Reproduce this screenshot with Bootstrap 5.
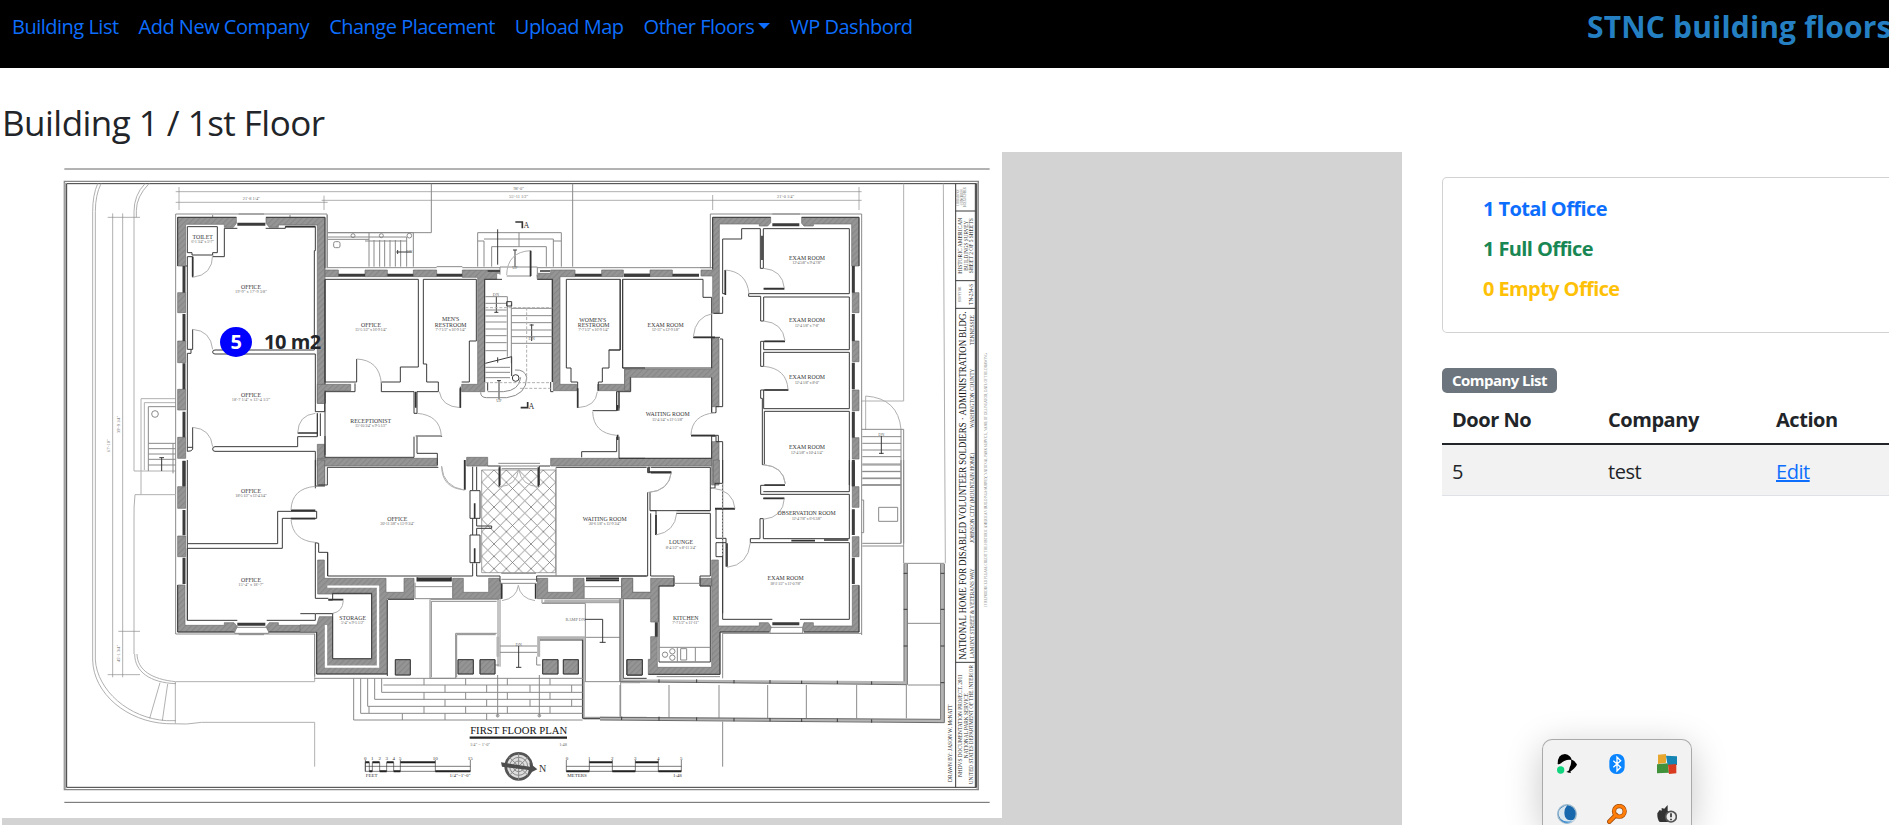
<!DOCTYPE html>
<html lang="en">
<head>
<meta charset="utf-8">
<meta name="viewport" content="width=device-width, initial-scale=1">
<title>STNC building floors</title>
<link rel="stylesheet" href="https://cdn.jsdelivr.net/npm/bootstrap@5.3.0/dist/css/bootstrap.min.css">
<style>
html{font-size:20px}
body{font-family:"Open Sans","Noto Sans",sans-serif;overflow:hidden;height:825px;letter-spacing:-.46px}
.topbar{height:68px;padding:12px 0 0 12px;white-space:nowrap}
.topbar ul{letter-spacing:-.5px}
.topbar a{text-decoration:none;line-height:30px}
.topbar ul{gap:20px}
.topbar .dropdown-toggle::after{margin-left:4px;vertical-align:5px}
.brand-title{font-size:30px;font-weight:700;line-height:30px;height:40px;color:#2580c3;width:302px;letter-spacing:.17px;overflow:hidden}
.page-title{font-size:35px;line-height:42px;margin:34px 0 8px 2px;letter-spacing:-.53px;font-weight:400}
.map-area{width:1400px;height:673px;margin-left:2px;background:#d3d3d3}
.map-area>svg{display:block;background:#fff}
.pin{left:218px;top:175px;gap:12px}
.pin-dot{width:32px;height:30px;border-radius:50%;background:#00f;color:#fff}
.side{margin-left:40px;width:447px;flex:none}
.stats{margin-top:25px;height:156px;padding:16px 40px;border-radius:5px 0 0 5px;border-right:0}
.stats div{height:40px;line-height:30px;flex:none;font-weight:700;letter-spacing:-.6px}
.list-tag{margin-top:35px;width:115px;height:25px;font-size:15px;line-height:25px;letter-spacing:-.55px;border-radius:5px}
.companies{margin-top:2px;table-layout:fixed}
.companies th,.companies td{padding:9.5px 10px 8px;line-height:30px}
.companies thead th{border-bottom:2px solid #212529}
.companies tbody td{padding-top:12px;padding-bottom:8px;background:#f2f2f2}
.tray{left:1542px;top:739px;width:150px;height:86px;overflow:hidden;background:#f2f2f2;border:1px solid #aaa;border-bottom:0;border-radius:10px 10px 0 0;box-shadow:0 8px 36px rgba(0,0,0,.22);padding:14px;display:grid;grid-template-columns:repeat(3,20px);gap:30px;align-content:start}
.k{fill:none;stroke:#3a3a3a;stroke-width:3}
.kk{fill:none;stroke:#333;stroke-width:5}
.win{fill:none;stroke:#3c3c3c;stroke-width:9}
.g{fill:none;stroke:#b0b0b0;stroke-width:3}
.m{fill:none;stroke:#8a8a8a;stroke-width:3}
.band{fill:none;stroke:#b4b4b4;stroke-width:9}
.wall{fill:url(#hatch);stroke:#6a6a6a;stroke-width:2}
.plan text{font-family:"Liberation Serif",serif;letter-spacing:0;text-anchor:middle;fill:#333}
.nm{font-size:17.5px}.dm{font-size:13px}
.plan .dm{fill:#6c6c6c}
</style>
</head>
<body>
<header class="topbar bg-black d-flex justify-content-between">
  <ul class="list-unstyled d-flex mb-0">
    <li><a href="#">Building List</a></li>
    <li><a href="#">Add New Company</a></li>
    <li><a href="#">Change Placement</a></li>
    <li><a href="#">Upload Map</a></li>
    <li><a href="#" class="dropdown-toggle">Other Floors</a></li>
    <li><a href="#">WP Dashbord</a></li>
  </ul>
  <div class="brand-title">STNC building floors</div>
</header>
<h1 class="page-title">Building 1 / 1st Floor</h1>
<main class="d-flex">
<section class="map-area position-relative flex-shrink-0">
<svg class="plan" width="1000" height="666" viewBox="6 456 3000 1998">
<defs>
<pattern id="hatch" width="12" height="12" patternUnits="userSpaceOnUse" patternTransform="rotate(45)"><rect width="12" height="12" fill="#959595"/><path d="M2 0V12" stroke="#848484" stroke-width="3"/></pattern>
<pattern id="tiles" width="37" height="37" patternUnits="userSpaceOnUse" x="545" y="30"><path d="M0 0L37 37M37 0L0 37" stroke="#777" stroke-width="2.4" fill="none"/></pattern>
</defs>
<!-- sheet frame -->
<path class="m" d="M193 507H2969M193 2407H2969" style="stroke:#666"/>
<path d="M193 544H2935V2369H193Z" fill="none" stroke="#888" stroke-width="4"/>
<path d="M196 548V2366M2932 548V2366" stroke="#aaa" stroke-width="6"/>
<path class="k" d="M200 551H2929V2362H200Z" stroke-width="4"/>

<!-- north west -->
<g transform="translate(0 420)">
<path class="g" d="M293 131Q278 165 278 215V1560M303 131Q286 165 286 215V1560M435 131Q402 165 402 215V993M447 131Q409 170 409 212V232"/>
<path class="m" style="stroke-width:2" d="M338 220V1612M368 220V1612M323 232H420M527 155H2585M527 187H983M965 181H2585M537 141V210M972 167V210M2138 165V210M2577 141V210"/>
<path class="g" d="M423 1064V776H527M402 993H527M433 990V788H527"/><path class="m" d="M445 993V800H527M445 910H527M445 926H527M445 942H527M445 958H527M445 975H527M519 910V1000"/>
<circle class="m" cx="465" cy="822" r="10"/><path class="k" d="M485 993V953M478 953H492"/>
<path class="m" d="M527 1482V222H981V385M716 222H792M870 225V232M638 225V232"/>
<path class="wall" d="M533 232H709V250L700 262H673V253H557V378H533ZM798 232H975V790H952V255H835V262H808L798 250ZM533 458H557V518H533ZM533 603H557V668H533ZM533 748H557V810H533ZM533 892H557V955H533ZM952 913H974V1035H952Z"/>
<path class="k" d="M709 232H533V378M798 232H975V385M975 420V790"/>
<path class="win" d="M552 378V458M552 522V603M552 670V748M552 815V892M552 962V1040M712 253H796"/>
<path class="k" d="M562 350V378H557M562 350H578V412M712 265H673V350H638V338H652V260H562V338H576V345H638M797 265H856V260H946V332H943V630H645Q638 630 638 636Q638 642 645 642H946V815H974V757M562 378V628H578V568M562 640H573V628M578 862V928Q575 934 562 934V640M893 890V920H645Q638 920 638 927Q638 934 645 934H946V1045M893 890H952V820M562 922H578M975 888V945M952 820V888M961 820V888"/>
<path class="kk" d="M893 879H952M856 260H946M578 350V410"/>
<path class="g" d="M638 345Q638 405 578 412M578 568Q632 572 638 628M578 862Q632 866 638 920M893 879Q895 825 946 820"/>
<text class="dm" x="754" y="180">21'-8 1/4"</text><text class="dm" transform="translate(330 917) rotate(-90)">67'-10"</text><text class="dm" transform="translate(361 853) rotate(-90)">39'-9 1/4"</text><text class="dm" transform="translate(361 1540) rotate(-90)">45'-1 3/4"</text>
<text class="nm" x="608" y="297">TOILET</text><text class="dm" x="608" y="309" textLength="68">6'-1 3/4" x 5'-7"</text>
<text class="nm" x="753" y="446">OFFICE</text><text class="dm" x="753" y="458">19'-9" x 17'-9 3/8"</text>
<text class="nm" x="753" y="771">OFFICE</text><text class="dm" x="753" y="783">18'-7 1/4" x 13'-4 1/2"</text>
</g>

<!-- north centre -->
<g transform="translate(900 420)">
<path class="m" d="M394 131V278H83M818 131V380M83 278H340V380M83 291H320V303H195M207 278V380M222 300V380M239 300V380M254 300V380M270 300V380M286 300V380M302 300V380M320 303V380M83 298H207M82 383H410M82 383V225M410 380H487M487 383H600M533 380V278H784V380M533 303H552V380M552 297H760V380M575 380V320H739V380M784 303H760M657 278V320M712 383H1240"/>
<circle class="m" cx="159" cy="287" r="6"/><circle class="m" cx="244" cy="287" r="6"/><circle class="m" cx="328" cy="287" r="7"/><rect class="m" x="101" y="305" width="19" height="18" rx="5"/>
<path class="k" d="M289 336H335M293 330V342M593 268V374M645 330V388M639 330H651M589 470V517M583 517H595M695 553V603M689 555H701M597 720V778M591 722H603"/>
<path class="wall" d="M75 390H115V410H75ZM195 390H262V410H195ZM340 390H410V410H340ZM487 390H605V400H590V418H554V755H485V733H533V412H487ZM710 400H752V390H825V410H780V733H830V752H760V418H712ZM905 390H970V410H905ZM52 733H152V752H74V790H52ZM74 955H412V978H52V955ZM500 952H563V978H500ZM893 733H974V688H990V752H893ZM752 955H1235V978H752Z"/>
<path class="win" d="M115 406H195M262 406H340M410 406H487M825 406H905M972 406H1050"/>
<path d="M600 381H712V404H600Z" fill="#fff"/><path class="m" d="M600 404V381H712V404M620 408H690"/>
<path class="k" d="M75 418H355V681H301V726H244V755H342V820H351V755H415V726H380V672H370V418H529V603H508V726H485M75 418V726H170V657M75 755V952H342V890M351 890V940H412V975M75 755H165V730M554 418V726M563 726V752M606 418H554M712 418H757V726M757 418V726M752 726V755H760M799 418H961V630H927V684H907V726H895V752M799 418V684H813V726H833V803M968 418V684H1035M481 803V740M691 332V410M950 755V812H878M957 755V805M950 890V935H845V952M957 890V955H1035M347 888H425V890M563 978H600V1035M750 978H718V1035"/>
<path class="g" d="M170 657Q238 660 244 730M418 755Q425 800 481 803M351 820Q420 825 424 888M620 405Q622 336 691 332M833 803Q888 800 892 755M878 815Q880 880 950 886M425 978Q425 1045 495 1050"/>
<path class="m" d="M556 470H622V650M634 490V670M556 490H620M556 510H620M556 528H620M556 546H620M556 567H620M556 587H620M556 608H620M556 632H620M634 505H757M634 527H757M634 548H757M634 570H757M634 590H757M634 610H757M556 682H630M556 697H630M556 713H630M542 757Q542 773 560 773H620Q680 765 680 712Q675 688 645 690M563 755H610Q658 752 662 712M600 978H718M605 986H712M595 970H720"/>
<path class="g" stroke-dasharray="9 5" d="M556 503H757M680 503V720M556 728H752M660 745H752"/>
<path class="k" d="M556 670L635 650V708M593 652V668M620 485H635V498H620Z"/><circle class="k" cx="647" cy="714" r="10"/>
<path class="kk" d="M646 246H667V265M662 803H683V786M481 745V803M692 332V408M833 745V803M347 755V803M563 393H600M720 393H750"/>
<text x="679" y="263" font-size="24">A</text><text x="694" y="806" font-size="24">A</text>
<text class="dm" x="656" y="150">98'-0"</text><text class="dm" x="656" y="174">55'-11 1/2"</text>
<text class="nm" x="213" y="561">OFFICE</text><text class="dm" x="213" y="574" textLength="96">15'-5 1/2" x 16'-9 1/4"</text>
<text class="nm" x="452" y="544">MEN'S</text><text class="nm" x="452" y="561">RESTROOM</text><text class="dm" x="452" y="574" textLength="92">7'-7 1/2" x 16'-9 1/4"</text>
<text class="nm" x="878" y="545">WOMEN'S</text><text class="nm" x="881" y="561">RESTROOM</text><text class="dm" x="881" y="574" textLength="92">7'-7 1/2" x 16'-9 1/4"</text>
<text class="nm" x="212" y="848">RECEPTIONIST</text><text class="dm" x="213" y="861" textLength="96">15'-10 3/4" x 9'-5 1/2"</text>
<text class="dm" x="588" y="468">DN</text><text class="dm" x="695" y="601">DN</text><text class="dm" x="597" y="787">UP</text><text class="dm" x="645" y="388">UP</text><text class="dm" x="328" y="340">DN</text>
</g>

<!-- north east -->
<g transform="translate(1800 420)">
<path class="g" d="M911 131V783H785M1030 131L1036 1270M797 870V768Q895 775 903 868"/>
<path class="m" d="M331 385V222H785V1485M300 383H331M517 222H600"/>
<path class="wall" d="M338 232H512V248L503 258H478V252H358V520H338V408H303V390H338ZM605 232H777V378H755V252H640V258H612L605 250ZM757 458H777V518H757ZM757 603H777V665H757ZM757 750H777V812H757ZM757 893H777V957H757ZM150 390H217V410H150ZM74 688H335V595H357V800H335V712H90V752H74ZM335 905H357V1035H335Z"/>
<path class="k" d="M338 388V232H512M605 232H777V378"/>
<path class="win" d="M72 406H150M217 406H297M517 254H598M760 378V458M760 522V603M760 668V748M760 815V893M760 960V1040"/>
<path class="k" d="M60 418V630H26M68 418V684H335V472H309V418H68M368 297H425V266H481V385H490V266H748V461H446V469H482V543H491V471H748V629H491V604H482V679H491V637H748V806H491V750H482V775H487V974H493V814H748V1035M368 297V461H376V390M368 470V520H340M360 597H368V800H348V818H335V800M280 592H360M553 447H491M555 604H490M565 750H490M335 712V818M92 712V755H50V812M57 755V812M57 955H335V888H348V905H368V1420M273 886H355V905"/>
<path class="kk" d="M376 390V465M486 287V360M491 446H553M493 604H555M493 750H565M280 592H345M273 887H345M147 980V996H214M53 795V812M53 884V900"/>
<path class="g" d="M376 390Q440 395 447 461M491 385Q548 390 553 445M491 543Q548 548 555 602M491 679Q560 685 564 748M340 520Q285 530 280 590M345 818Q275 825 273 885M491 974Q550 980 556 1030M214 996Q210 1050 145 1058"/>
<path class="m" d="M785 868H911V1210M787 890H903M787 910H903M787 930H903M787 950H903M787 972H903M787 994H903M787 1014H903M787 1034H903M903 868V1210"/><path class="k" d="M844 888V942M837 940H851"/>
<path class="k" d="M1067 131V1942M1126 131V1942M1067 213H1126M1067 422H1126M1067 505H1126M1067 1567H1126"/>
<text class="dm" x="557" y="174">21'-0 1/4"</text>
<text class="nm" x="621" y="359">EXAM ROOM</text><text class="dm" x="621" y="372" textLength="88">12'-4 5/8" x 9'-4 7/8"</text>
<text class="nm" x="621" y="547">EXAM ROOM</text><text class="dm" x="621" y="560" textLength="74">12'-4 1/8" x 7'-8"</text>
<text class="nm" x="621" y="718">EXAM ROOM</text><text class="dm" x="621" y="731" textLength="74">12'-4 1/8" x 8'-0"</text>
<text class="nm" x="621" y="928">EXAM ROOM</text><text class="dm" x="621" y="941" textLength="97">12'-4 5/8" x 10'-4 1/4"</text>
<text class="nm" x="197" y="561">EXAM ROOM</text><text class="dm" x="197" y="574" textLength="84">12'-11" x 12'-9 1/8"</text>
<text class="nm" x="203" y="829">WAITING ROOM</text><text class="dm" x="203" y="842" textLength="94">15'-4 1/4" x 11'-5 1/8"</text><text class="dm" x="844" y="888">DN</text>
<!-- title block -->
<g transform="rotate(-90)">
<text x="-1037" y="1097" font-size="31" textLength="1045" lengthAdjust="spacingAndGlyphs" style="fill:#111">NATIONAL HOME FOR DISABLED VOLUNTEER SOLDIERS · ADMINISTRATION BLDG.</text>
<text x="-1420" y="1121" font-size="16" textLength="270" lengthAdjust="spacingAndGlyphs">LAMONT STREET &amp; VETERANS WAY</text>
<text x="-1074" y="1121" font-size="16" textLength="270" lengthAdjust="spacingAndGlyphs">JOHNSON CITY (MOUNTAIN HOME)</text>
<text x="-775" y="1121" font-size="16" textLength="178" lengthAdjust="spacingAndGlyphs">WASHINGTON COUNTY</text><text x="-570" y="1121" font-size="16" textLength="90" lengthAdjust="spacingAndGlyphs">TENNESSEE</text>
<text x="-317" y="1087" font-size="16" textLength="168" lengthAdjust="spacingAndGlyphs">HISTORIC AMERICAN</text><text x="-317" y="1103" font-size="16" textLength="150" lengthAdjust="spacingAndGlyphs">BUILDINGS SURVEY</text><text x="-317" y="1119" font-size="16" textLength="165" lengthAdjust="spacingAndGlyphs">SHEET 2 OF 5 SHEETS</text>
<text x="-463" y="1119" font-size="16" textLength="62" lengthAdjust="spacingAndGlyphs">TN-254-S</text><text class="dm" x="-463" y="1083" textLength="48" lengthAdjust="spacingAndGlyphs">SURVEY NO.</text>
<text class="dm" x="-172" y="1077" textLength="50" lengthAdjust="spacingAndGlyphs">LIBRARY OF</text><text class="dm" x="-172" y="1088" textLength="48" lengthAdjust="spacingAndGlyphs">CONGRESS</text><text class="dm" x="-172" y="1099" textLength="60" lengthAdjust="spacingAndGlyphs">INDEX NUMBER</text>
<text x="-1757" y="1087" font-size="16" textLength="308" lengthAdjust="spacingAndGlyphs">NHDVS DOCUMENTATION PROJECT, 2011</text><text x="-1757" y="1103" font-size="16" textLength="195" lengthAdjust="spacingAndGlyphs">NATIONAL PARK SERVICE</text><text x="-1754" y="1119" font-size="16" textLength="358" lengthAdjust="spacingAndGlyphs">UNITED STATES DEPARTMENT OF THE INTERIOR</text>
<text x="-1810" y="1056" font-size="16" textLength="232" lengthAdjust="spacingAndGlyphs">DRAWN BY: JASON W. McNATT</text>
<text x="-1020" y="1161" font-size="9" textLength="760" lengthAdjust="spacingAndGlyphs" style="fill:#777">IF REPRODUCED PLEASE CREDIT THE HISTORIC AMERICAN BUILDINGS SURVEY, NATIONAL PARK SERVICE, NAME OF DELINEATOR, DATE OF THE DRAWING</text>
</g></g>

<!-- south west -->
<g transform="translate(0 1380)">
<path class="g" d="M278 600C280 700 380 785 500 791L560 792L605 787H944V920M286 600C292 690 385 775 500 782H527M405 104H527M405 104Q401 140 402 180V582M411 582C412 630 455 658 527 665H944V520M404 582C404 635 450 668 527 671"/>
<path class="m" style="stroke-width:2" d="M480 668L449 775M503 672L487 782M526 666V790M355 514H420M323 644H420"/>
<path class="m" d="M527 522H944V650M716 524H792"/>
<path class="wall" d="M533 80H557V145H533ZM533 228H557V290H533ZM533 375H555V496H673V488H702L712 500L704 516H533ZM798 500L808 488H835V496H955V516H806ZM952 0H974V75H952Z"/>
<path class="k" d="M533 375V516H704M806 516H955"/>
<path class="win" d="M552 3V78M552 150V226M552 293V372M712 493H796"/><path class="m" d="M704 502H806V520H704Z"/>
<path class="k" d="M562 0V251H833V154H950V175H847V265H562V481H712M800 481H946V461H1000M946 0V78H975M562 251V481M946 248V415H985M946 248L956 250V277H983V348"/>
<path class="kk" d="M873 151H946M873 176H946"/>
<path class="g" d="M946 79Q875 85 873 150M873 178Q878 242 946 247"/>
<text class="nm" x="753" y="99">OFFICE</text><text class="dm" x="753" y="111" textLength="94">18'-5 1/2" x 13'-4 3/4"</text>
<text class="nm" x="753" y="365">OFFICE</text><text class="dm" x="753" y="377">15'-4" x 18'-7"</text>
</g>

<!-- south centre -->
<g transform="translate(900 1380)">
<path d="M545 30H767V338H545Z" fill="url(#tiles)" stroke="#777" stroke-width="2"/>
<path class="wall" d="M53 300H73V355H258V397H312V355H342V416H260V642H50V516H0V495H50L58 470H98V598H215V402H53ZM458 355H490V397H566V355H598L605 375V416H458ZM712 355H743V397H820V355H852V416H712ZM965 355H998V397H1052V416H965Z"/>
<path d="M82 380H234V620H78V495" fill="none" stroke="#fff" stroke-width="7"/>
<path class="k" d="M82 22H415M82 22V75H55M83 277V348H518V310M518 20V90M530 20V90M530 175V198H575V205H530V225M518 175V225M530 310V348H600V365M510 92H540V175H510ZM510 225H540V308H510ZM98 460V596H215V400H98V420H85M263 418H342M1 461H45M768 22H1040M710 365V348H1040M495 0V90M262 420V648M50 516V642H262"/>
<path class="kk" d="M352 352V362H453V352M352 355H453M352 359H453M858 355H957M858 361H957M524 130V175M524 265V308M598 22V80M715 22V80M85 419H130M605 370V416M707 370V416M494 0V88"/>
<path class="g" d="M425 20Q430 80 492 90M598 80Q650 78 656 28Q665 78 715 80M606 422Q650 415 655 376Q660 415 705 422M130 422Q128 455 98 460"/>
<path class="m" d="M604 340H708M604 358H708M604 370H708M345 368V416H458V368M345 380H458M852 368V416H965V368M852 380H965M768 22V348M392 418H597M394 424H590M390 418V655M394 424V652M390 655H467V520H590M470 652V524H587M594 418V620M600 418V620M583 600V615H597M600 558H712M600 577H712M710 590V615H722M726 418V430H855M856 430V665M730 428H965M856 532H960M960 430V665M852 665H1040M962 665V775"/>
<path class="band" d="M594 530V590M716 590V533H856M850 535V775M733 423H965V665H1020M850 775H1040"/>
<path class="k" d="M720 540H848V775H1040M970 418V655H1040"/>
<path class="wall" d="M286 599H331V645H286ZM474 599H520V642H474ZM540 599H585V642H540ZM728 599H774V642H728ZM790 599H835V642H790ZM981 599H1026V645H981Z"/>
<path class="k" d="M286 599H331V645H286ZM474 599H520V642H474ZM540 599H585V642H540ZM728 599H774V642H728ZM790 599H835V642H790ZM981 599H1026V645H981Z"/>
<path class="m" d="M43 655H850M161 655V780H848M182 655V760H848M203 655V739H848M224 655V718H848M245 655V697H848M250 675H848M372 655V675M497 655V675M622 655V675M750 655V675M435 675V697M560 675V697M690 675V697M815 675V697M372 697V718M497 697V718M622 697V718M750 697V718M435 718V739M560 718V739M690 718V739M815 718V739M372 739V760M497 739V760M622 739V760M750 739V760M307 760V780M435 760V780M560 760V780M207 739V760"/>
<path class="m" stroke-width="5" d="M593 645V770M718 645V770"/><circle class="m" cx="593" cy="767" r="4"/><circle class="m" cx="718" cy="767" r="4"/>
<path class="k" d="M656 558V622M648 622H664M855 478H908V548M899 547H917"/>
<text class="nm" x="292" y="182">OFFICE</text><text class="dm" x="292" y="195" textLength="102">20'-11 3/8" x 15'-9 3/4"</text>
<text class="nm" x="914" y="182">WAITING ROOM</text><text class="dm" x="914" y="195" textLength="96">20'-6 1/8" x 15'-9 3/4"</text>
<text class="nm" x="158" y="480">STORAGE</text><text class="dm" x="158" y="492" textLength="70">5'-4" x 9'-5 1/2"</text><text class="dm" x="656" y="557">DN</text><text class="dm" x="826" y="484">RAMP DN</text>
<text x="656" y="821" font-size="31" textLength="291" lengthAdjust="spacingAndGlyphs" style="fill:#111">FIRST FLOOR PLAN</text><path d="M509 833H801" stroke="#222" stroke-width="7"/>
<text class="dm" x="540" y="858">1/4" = 1'-0"</text><text class="dm" x="789" y="858">1:48</text>
<path class="k" style="stroke-width:2" d="M196 900V935M196 919H511M196 907V934H511V900M208 907V934M217 907V934M239 907V934M260 907V934M281 907V934M301 900V934M406 900V934M799 900V934H1144V900M799 919H1144M868 900V934M937 900V934M1006 900V934M1075 900V934"/>
<path d="M196 907H208M217 907H239M260 907H281M301 907H406M208 934H217M239 934H260M281 934H301M406 934H511M868 907H937M799 934H868M937 934H1006M1006 907H1075M1075 934H1144" stroke="#222" stroke-width="6"/>
<g font-size="15"><text x="196" y="899">0</text><text x="217" y="899">1</text><text x="239" y="899">2</text><text x="260" y="899">3</text><text x="281" y="899">4</text><text x="301" y="899">5</text><text x="406" y="899">10</text><text x="511" y="899">15</text><text x="801" y="899">0</text><text x="868" y="899">1</text><text x="937" y="899">2</text><text x="1006" y="899">3</text><text x="1075" y="899">4</text><text x="1144" y="899">5</text><text x="215" y="952">FEET</text><text x="480" y="952">1/4"=1'-0"</text><text x="831" y="952">METERS</text><text x="1132" y="952">1:48</text></g>
<circle cx="656" cy="919" r="39" fill="#ddd" stroke="#555" stroke-width="8"/><circle class="m" cx="656" cy="919" r="27"/><circle class="m" cx="656" cy="919" r="16"/><path class="m" d="M656 880V960M628 892L684 946M684 892L628 946"/><path d="M603 907L690 920L688 908L712 928L684 942L686 930L606 920Z" fill="#4d4d4d"/>
<text x="728" y="937" font-size="30" style="fill:#333">N</text>
</g>

<!-- south east -->
<g transform="translate(1800 1380)">
<path class="wall" d="M65 355H98V397H152V355H222V378H175V486H152V416H65ZM152 530H172V622H335V300H355V498H478V488H505L514 502L508 516H360V643H145V598H152ZM608 502L612 488H640V498H757V376H777V516H612ZM757 80H777V142H757ZM757 230H777V290H757ZM340 0H358V70H340ZM300 355H335V378H300Z"/>
<path class="k" d="M508 516H360V643H145M612 516H777V376"/>
<path class="win" d="M760 5V78M760 148V225M760 293V372M517 491H598M169 487V530"/>
<path class="k" d="M143 22V38H150M152 22H331V84H345V70H368V0M143 97V348H0M150 97V152H331V84M150 152H168V225M230 152H331M152 160V348H222V378H177V606H331V378H300V348H331V160H228M348 147V235H378V320M348 248V290H368M368 248V478H517M348 248H378M346 147H405M451 248V236H480V176H490V236H748V103H482V76H555M451 248H748V478H600M490 95H748V0M490 115H553"/>
<path class="kk" d="M152 38H214M168 165V225M345 146H405M381 250V320M493 75H555M490 115H553M574 242H645M672 240H745"/>
<path class="g" d="M214 38Q205 95 145 97M230 160Q225 215 168 225M335 84Q400 90 405 146M451 248Q445 315 381 322M490 14Q550 18 556 72M553 115Q550 172 490 178"/><path class="g" stroke-dasharray="6 4" d="M368 70V290"/>
<path class="m" d="M222 370H300M177 562H331M232 562V605M286 562V605M242 566H260V600H242ZM510 502H608V520H510ZM367 520H785M368 520V655M368 785V920"/><circle class="m" cx="195" cy="584" r="8"/><circle class="m" cx="217" cy="574" r="8"/><circle class="m" cx="217" cy="593" r="8"/>
<path class="m" d="M785 76H903M787 258H911V0M787 250H903V0M787 15H903M787 35H903M787 56H903M836 142H893V184H836ZM785 120H791V218H785M170 650H360M911 258V310M911 310H1033M924 490H1022M924 675H1022M60 675V770M207 675V775M357 675V775M503 675V775M619 675V775M770 675V775M919 675V775"/>
<path class="band" d="M65 416V662L917 668V312M0 775L1028 783V312"/>
<path class="m" style="stroke:#6a6a6a" d="M60 416V665L919 674H922V312M912 312V664M0 772L1022 778V312M0 780L1033 788V312"/>
<path class="k" d="M177 658V668M290 658V668M402 660V670M510 660V670M605 662V672M712 662V672M815 664V674M65 770V780M177 770V782M290 772V782M402 774V784M510 774V784M605 776V786M712 776V786M815 778V788M911 340H922M911 448H922M911 558H922M1022 340H1033M1022 448H1033M1022 558H1033M1022 668H1033"/>
<path class="wall" d="M81 599H127V645H81Z"/><path class="k" d="M81 599H127V645H81Z"/>
<text class="nm" x="620" y="166">OBSERVATION ROOM</text><text class="dm" x="620" y="179" textLength="90">12'-4 7/8" x 6'-6 3/8"</text>
<text class="nm" x="243" y="253">LOUNGE</text><text class="dm" x="243" y="267" textLength="92">8'-4 1/2" x 8'-11 3/4"</text>
<text class="nm" x="557" y="361">EXAM ROOM</text><text class="dm" x="557" y="374" textLength="94">18'-2 1/2" x 11'-0 7/8"</text>
<text class="nm" x="257" y="479">KITCHEN</text><text class="dm" x="257" y="492" textLength="80">7'-7 1/2" x 11'-11"</text>
</g>
</svg>
<div class="pin position-absolute d-flex align-items-center fw-bold">
  <span class="pin-dot d-flex align-items-center justify-content-center">5</span><span>10 m2</span>
</div>
</section>
<aside class="side">
  <div class="card stats shadow-none">
    <div class="text-primary">1 Total Office</div>
    <div class="text-success">1 Full Office</div>
    <div class="text-warning">0 Empty Office</div>
  </div>
  <span class="list-tag badge d-block text-bg-secondary p-0">Company List</span>
  <table class="table companies">
    <colgroup><col style="width:156px"><col style="width:168px"><col></colgroup>
    <thead><tr><th>Door No</th><th>Company</th><th>Action</th></tr></thead>
    <tbody><tr><td>5</td><td>test</td><td><a href="#">Edit</a></td></tr></tbody>
  </table>
</aside>
</main>
<div class="tray position-absolute">
  <svg width="20" height="20" viewBox="0 0 60 60"><path d="M2 30Q2 0 24 0Q42 4 44 18Q26 14 12 28Q6 32 2 30ZM42 16Q54 20 60 32Q52 46 34 56L38 40Q44 30 42 16ZM28 54L38 48L42 57Z"/><circle cx="11" cy="48" r="11" fill="#11d57e"/></svg>
  <svg width="20" height="20" viewBox="0 0 60 60"><rect x="7" width="46" height="60" rx="21" fill="#0a84ff"/><path d="M19 20L41 40L30 51V9L41 20L19 40" fill="none" stroke="#fff" stroke-width="4"/></svg>
  <svg width="20" height="20" viewBox="0 0 60 60"><path d="M3 2L27 0V26L3 30Z" fill="#e7a62e"/><path d="M27 5L60 7V33L32 34Z" fill="#1785b3"/><path d="M0 31L32 28L36 56L0 58Z" fill="#42923c"/><path d="M33 32L58 30V58L36 60Z" fill="#d83b20"/></svg>
  <svg width="20" height="20" viewBox="0 0 60 60"><circle cx="30" cy="30" r="28" fill="#1767ad" stroke="#9db9cc" stroke-width="4"/><path d="M31 3Q-2 14 6 36Q14 58 38 56Q50 54 54 46Q32 54 24 38Q18 18 31 3Z" fill="#dbe7ef"/><path d="M10 42Q22 58 46 50Q30 62 16 52Z" fill="#3d8fd0"/></svg>
  <svg width="20" height="20" viewBox="0 0 60 60"><path d="M27 33L7 53" stroke="#9c4a10" stroke-width="14" stroke-linecap="round"/><circle cx="37" cy="22" r="16" fill="none" stroke="#9c4a10" stroke-width="13"/><path d="M27 33L7 53" stroke="#ff7d08" stroke-width="9" stroke-linecap="round"/><circle cx="37" cy="22" r="16" fill="none" stroke="#ff7d08" stroke-width="9"/></svg>
  <svg width="20" height="20" viewBox="0 0 60 60"><path d="M1 28L8 18L14 20V12L22 14L32 3V20L38 26V54H8Q0 46 1 28Z" fill="#333"/><circle cx="42" cy="38" r="16" fill="#eee" stroke="#555" stroke-width="5"/><path d="M42 28V40M42 44V49" stroke="#333" stroke-width="5"/></svg>
</div>
<script src="https://cdn.jsdelivr.net/npm/bootstrap@5.3.0/dist/js/bootstrap.bundle.min.js"></script>
</body>
</html>
